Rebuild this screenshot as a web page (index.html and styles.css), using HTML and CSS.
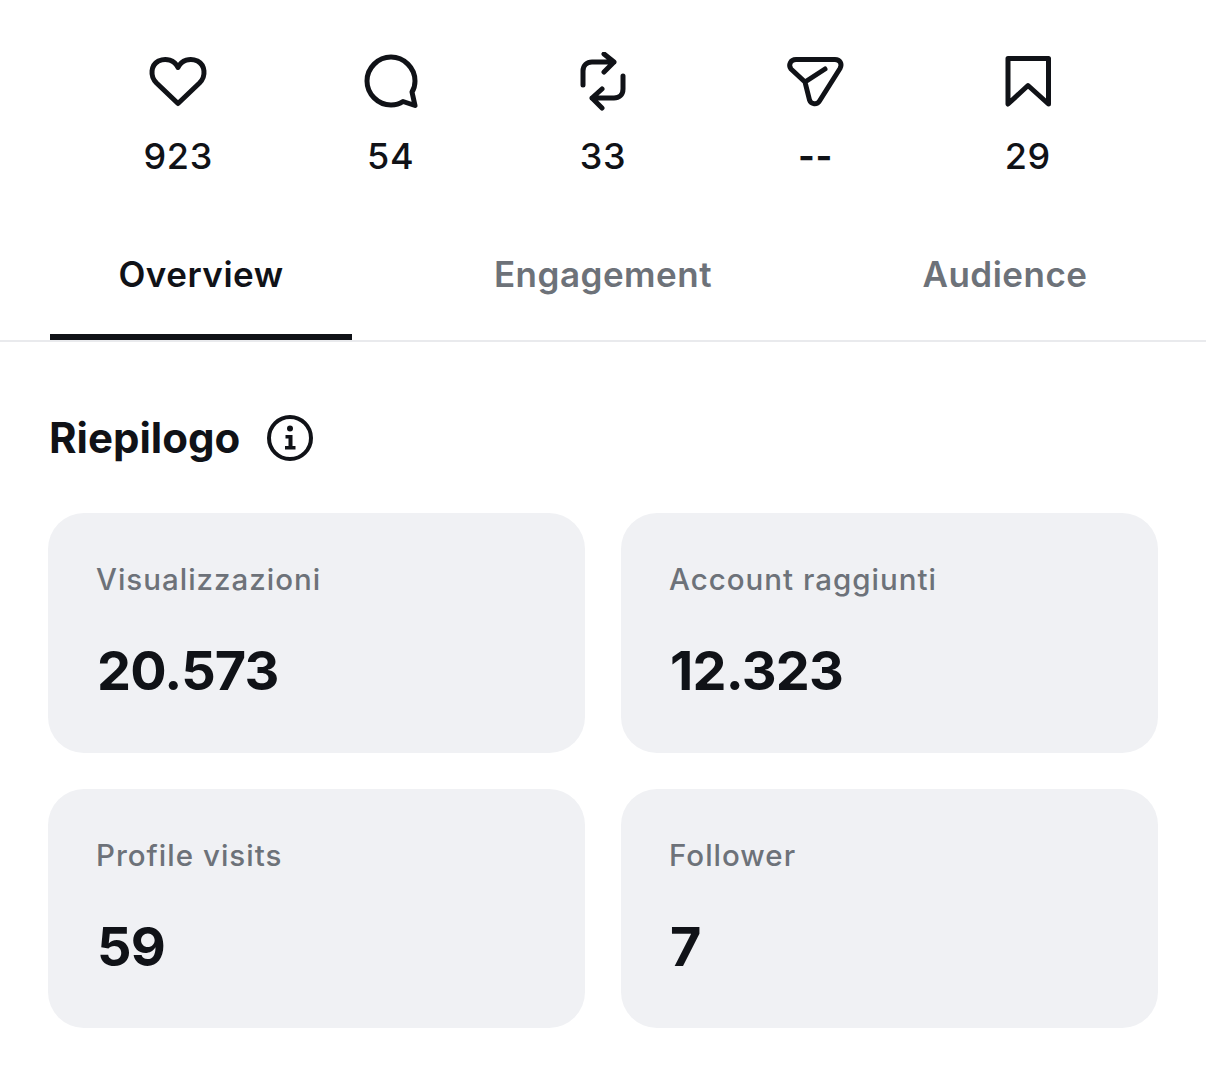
FILE: index.html
```html
<!DOCTYPE html>
<html>
<head>
    <meta charset="utf-8">
    <title>Insights</title>
    <link rel="stylesheet" href="styles.css">
</head>
<body>
    <div class="stats">
        <div class="stat">
            <svg class="stat-icon" viewBox="0 0 60 60"><path d="M30 51.500 L8.500 31 C1.500 24 3 13 10.500 9 C18 5.500 26.500 8 30 15.500 C33.500 8 42 5.500 49.500 9 C57 13 58.500 24 51.500 31 Z"/></svg>
            <span class="stat-num">923</span>
        </div>
        <div class="stat">
            <svg class="stat-icon" viewBox="0 0 60 60"><path d="M30 5 C43 5 54 16 54 29 C54 33 53 37 51 40 L54 53.500 L42 49.500 C38.500 52 34.500 53 30 53 C17 53 6 42 6 29 C6 16 17 5 30 5 Z"/></svg>
            <span class="stat-num">54</span>
        </div>
        <div class="stat">
            <svg class="stat-icon" viewBox="0 0 60 60"><path d="M10 33 V19 C10 13 14 10 19 10 H41 M31 2 L41 10 L31 20 M50 24 V37 C50 43 46 46 41 46 H19 M29 37 L19 46 L29 56"/></svg>
            <span class="stat-num">33</span>
        </div>
        <div class="stat">
            <svg class="stat-icon" viewBox="0 0 60 60"><path d="M11 7.500 H50 C55 7.500 57.500 12 55 16.500 L34.500 49 C32 53 26 52.500 24.500 48 L20 30 L6 17 C3 13 5.500 7.500 11 7.500 Z M20 30 L40 17"/></svg>
            <span class="stat-num stat-dash">--</span>
        </div>
        <div class="stat">
            <svg class="stat-icon" viewBox="0 0 60 60"><path d="M10 6.500 H50.500 V52 L30 33.500 L10 52 Z"/></svg>
            <span class="stat-num">29</span>
        </div>
    </div>

    <div class="tabs">
        <div class="tab active"><span>Overview</span></div>
        <div class="tab"><span>Engagement</span></div>
        <div class="tab"><span>Audience</span></div>
    </div>

    <div class="section-head">
        <h2>Riepilogo</h2>
        <svg class="info-icon" viewBox="0 0 46 46">
            <circle class="info-ring" cx="23" cy="23" r="21"/>
            <circle class="info-dot" cx="23" cy="13.500" r="3"/>
            <path class="info-stem" d="M18.500 20 H25.500 V31 H28.500 V34.500 H18 V31 H21.500 V23.500 H18.500 Z"/>
        </svg>
    </div>

    <div class="cards">
        <div class="card">
            <div class="card-label">Visualizzazioni</div>
            <div class="card-value">20.573</div>
        </div>
        <div class="card">
            <div class="card-label">Account raggiunti</div>
            <div class="card-value">12.323</div>
        </div>
        <div class="card">
            <div class="card-label">Profile visits</div>
            <div class="card-value">59</div>
        </div>
        <div class="card">
            <div class="card-label">Follower</div>
            <div class="card-value">7</div>
        </div>
    </div>
</body>
</html>
```

FILE: styles.css
```css
html, body {
    margin: 0;
    padding: 0;
}

body {
    font-family: Inter, "Liberation Sans", sans-serif;
    background: #fff;
    color: #101217;
    height: 1079px;
    overflow: hidden;
}

.stats {
    display: grid;
    grid-template-columns: repeat(5, 1fr);
    padding: 52px 72px 0 72px;
}

.stat {
    display: flex;
    flex-direction: column;
    align-items: center;
}

.stat-icon {
    width: 60px;
    height: 60px;
    fill: none;
    stroke: #101217;
    stroke-width: 5;
    stroke-linecap: round;
    stroke-linejoin: round;
}

.stat-num {
    margin-top: 22px;
    font-size: 36px;
    line-height: 44px;
    font-weight: 500;
    letter-spacing: 0.6px;
}

.stat-dash {
    font-weight: 700;
}

.tabs {
    display: grid;
    grid-template-columns: repeat(3, 1fr);
    margin-top: 55px;
    border-bottom: 2px solid #e9eaed;
}

.tab {
    height: 107px;
    margin: 0 50px;
    display: flex;
    align-items: center;
    justify-content: center;
    box-sizing: border-box;
    font-size: 35px;
    font-weight: 600;
    letter-spacing: 0.5px;
    color: #6d7279;
    padding-bottom: 25px;
}

.tab.active {
    color: #101217;
    border-bottom: 6px solid #101217;
    padding-bottom: 19px;
}

.section-head {
    display: flex;
    align-items: center;
    gap: 27px;
    padding: 68px 48px 0 49px;
}

.section-head h2 {
    margin: 0;
    font-size: 42px;
    line-height: 56px;
    font-weight: 700;
}

.info-icon {
    width: 46px;
    height: 46px;
}

.info-ring {
    fill: none;
    stroke: #101217;
    stroke-width: 4;
}

.info-dot, .info-stem {
    fill: #101217;
}

.cards {
    display: grid;
    grid-template-columns: 1fr 1fr;
    gap: 36px;
    padding: 47px 48px 0 48px;
}

.card {
    height: 239.500px;
    box-sizing: border-box;
    background: #f0f1f4;
    border-radius: 36px;
    padding: 46px 49px 0 48px;
}

.card-label {
    font-size: 29.500px;
    line-height: 40px;
    font-weight: 500;
    letter-spacing: 1px;
    color: #6d7279;
}

.card-value {
    margin-top: 39px;
    padding-left: 1px;
    font-size: 54px;
    line-height: 66px;
    font-weight: 700;
    letter-spacing: -0.8px;
}
```
